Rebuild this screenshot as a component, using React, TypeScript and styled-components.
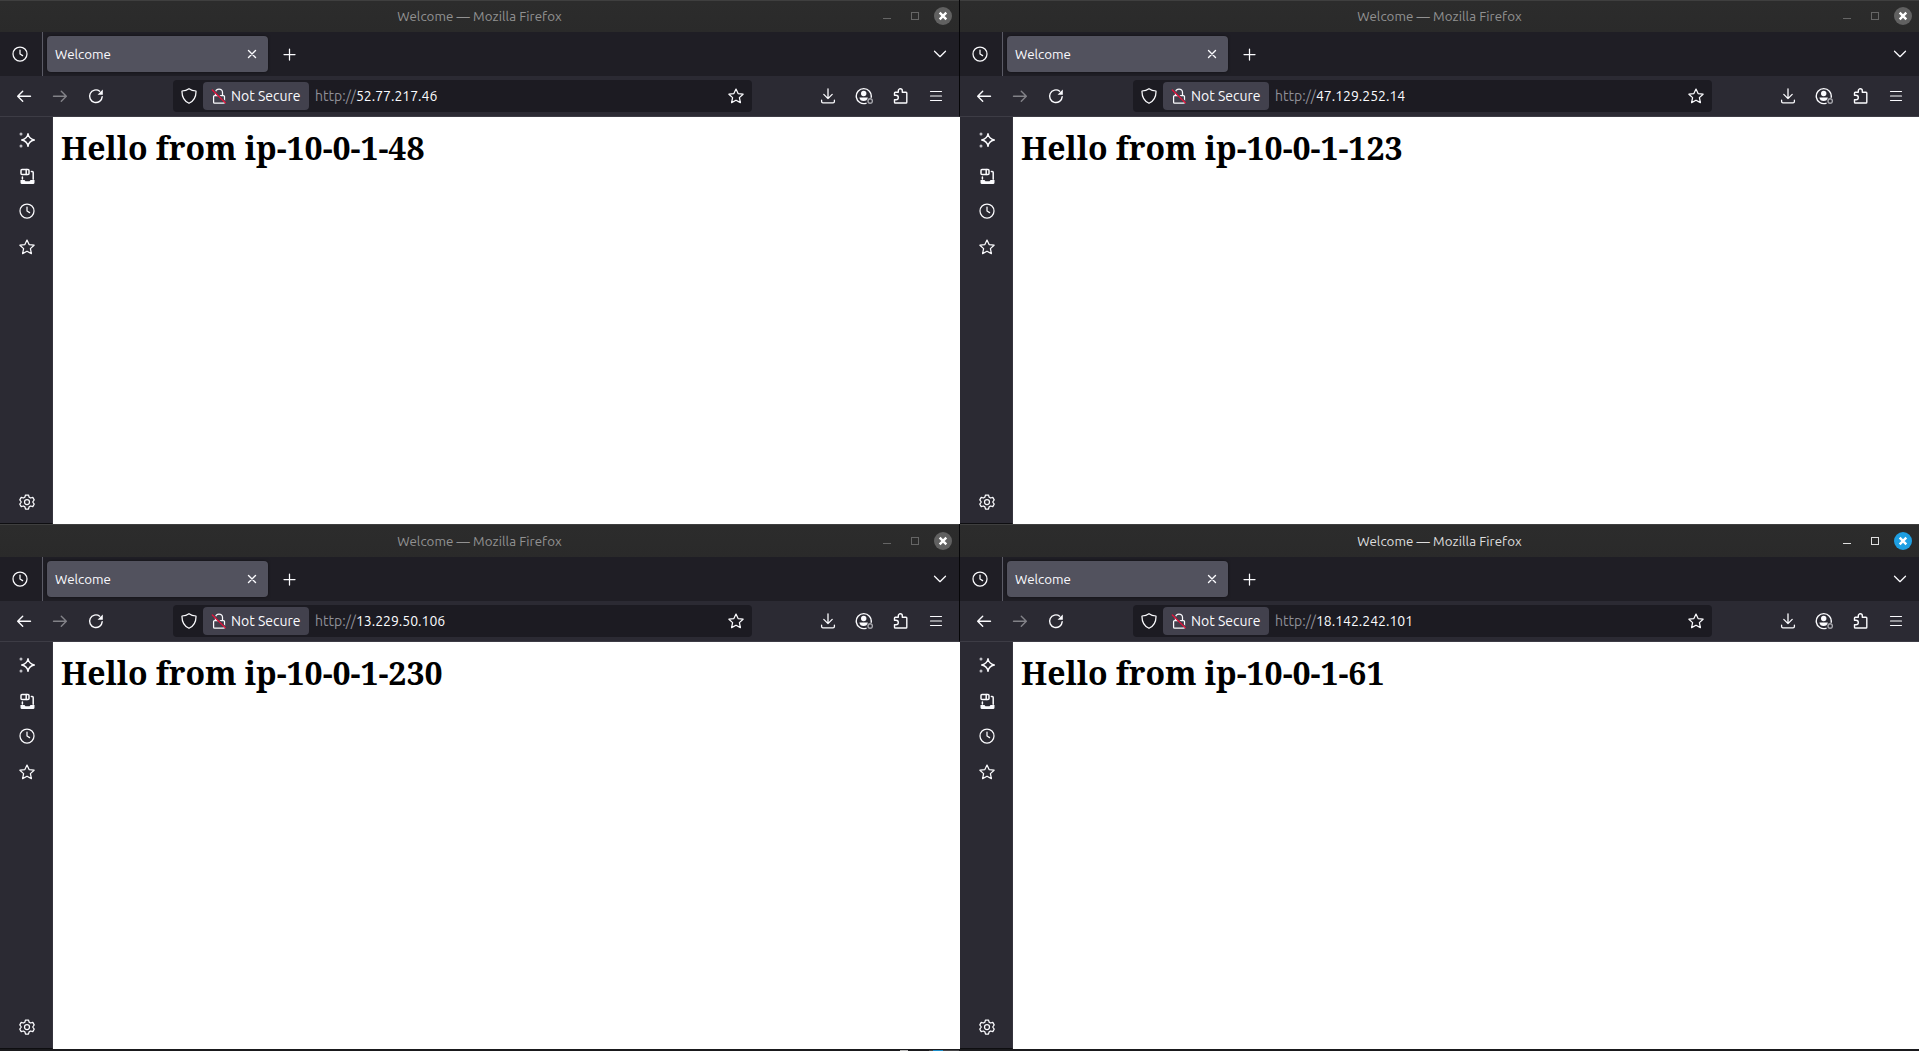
import React from "react";
import styled, { createGlobalStyle, css } from "styled-components";

const UI_FONT = `"Ubuntu", "Noto Sans", "Open Sans", sans-serif`;

const GlobalStyle = createGlobalStyle`
  * { box-sizing: border-box; }
  html, body { margin: 0; padding: 0; background: #151517; overflow: hidden; }
  svg { display: block; flex: none; }
`;

const Desktop = styled.div`
  display: grid;
  grid-template-columns: 960px 959px;
  grid-template-rows: 524px 525px 2px;
  width: 1919px;
  height: 1051px;
  font-family: ${UI_FONT};
  color: #fbfbfe;
`;

const Frame = styled.section`
  display: flex;
  flex-direction: column;
  min-width: 0;
  background: #2b2a33;
`;

const edge = css`
  border-right: 1px solid #060608;
  ${Frame}:nth-child(even) & { border-right: 0; }
`;

const TitleBar = styled.header<{ $active?: boolean; $lower?: boolean }>`
  display: grid;
  grid-template-columns: 1fr auto 1fr;
  align-items: center;
  flex: none;
  height: ${(p) => (p.$lower ? 33 : 32)}px;
  padding-top: ${(p) => (p.$lower ? 1 : 0)}px;
  background: linear-gradient(#3f3f3f 0 1px, #2c2c2c 1px 2px, #2a2a2a);
  color: ${(p) => (p.$active ? "#dedede" : "#929292")};
  ${edge}
`;

const Title = styled.h2`
  grid-column: 2;
  margin: 0;
  padding-top: 1px;
  font-size: 13.33px;
  line-height: 19px;
  font-weight: 400;
  letter-spacing: 0.07px;
  white-space: nowrap;
`;

const WindowControls = styled.div`
  display: flex;
  align-items: center;
  justify-content: flex-end;
  padding-right: 7px;
`;

const TabStrip = styled.nav`
  display: flex;
  align-items: center;
  flex: none;
  height: 44px;
  background: #1f1e25;
  ${edge}
`;

const HistorySlot = styled.div`
  display: flex;
  align-items: center;
  width: 43px;
  height: 44px;
  padding-left: 11.5px;
  border-right: 1px solid #5b5b66;
`;

const Tab = styled.div`
  display: flex;
  align-items: center;
  justify-content: space-between;
  width: 221px;
  height: 36px;
  margin: 0 13px 0 4px;
  padding: 0 8px;
  border-radius: 4px;
  background: #52525e;
  box-shadow: 0 0 3px rgba(0, 0, 0, 0.5);
`;

const TabLabel = styled.span`
  padding-top: 1px;
  font-size: 13.33px;
  line-height: 19px;
`;

const TabsMenu = styled.div`
  margin-left: auto;
  padding-right: 11px;
`;

const Toolbar = styled.div`
  display: flex;
  align-items: center;
  flex: none;
  height: 41px;
  padding: 0 15px 1px 16px;
  border-bottom: 1px solid #3d3c45;
  ${edge}
`;

const NavButtons = styled.div`
  display: flex;
  gap: 20px;
  width: 157px;
`;

const AddressBar = styled.div`
  display: flex;
  align-items: center;
  width: 579px;
  height: 32px;
  padding: 0 8px;
  border-radius: 4px;
  background: #1c1b22;
`;

const SecurityChip = styled.div`
  display: flex;
  align-items: center;
  gap: 4px;
  width: 106px;
  height: 28px;
  margin: 0 6px 0 6px;
  padding-left: 8px;
  border-radius: 4px;
  background: #42414d;
  font-size: 14px;
  white-space: nowrap;
`;

const Url = styled.span`
  font-size: 14px;
  white-space: nowrap;
`;

const Scheme = styled.span`
  color: #8f8f98;
`;

const StarSlot = styled.div`
  margin-left: auto;
`;

const Actions = styled.div`
  display: flex;
  align-items: center;
  justify-content: space-between;
  width: 124px;
  margin-left: auto;
`;

const Body = styled.div`
  display: flex;
  flex: 1;
  min-height: 0;
`;

const Sidebar = styled.aside`
  display: flex;
  flex-direction: column;
  gap: 20px;
  width: 53px;
  padding: 15px 0 13px 19px;
  border-right: 1px solid #35343d;
  border-bottom: 1px solid #0e0e11;
`;

const HistoryItem = styled.div`
  margin: -1px 0 0 -0.5px;
`;

const SettingsSlot = styled.div`
  margin-top: auto;
`;

const Page = styled.main`
  flex: 1;
  padding: 9px 8px;
  background: #ffffff;
`;

const Heading = styled.h1`
  margin: 0;
  color: #000000;
  font-family: "Noto Serif", "DejaVu Serif Condensed", "DejaVu Serif", serif;
  font-size: 32px;
  line-height: 44px;
  font-weight: 700;
  letter-spacing: -0.04px;
  white-space: nowrap;
`;

const Panel = styled.footer`
  display: flex;
  grid-column: 1 / -1;
  background: #1a1a1d;
`;

const PanelMark = styled.i<{ $gap: number; $w: number; $c: string }>`
  width: ${(p) => p.$w}px;
  height: 1px;
  margin: 1px 0 0 ${(p) => p.$gap}px;
  background: ${(p) => p.$c};
`;

type IconProps = { children: React.ReactNode; dim?: boolean; size?: number; width?: number };

const Icon = ({ children, dim, size = 16, width = 1.25 }: IconProps) => (
  <svg
    width={size}
    height={size}
    viewBox={`0 0 ${size} ${size}`}
    fill="none"
    stroke="#fbfbfe"
    strokeWidth={width}
    strokeLinecap="round"
    strokeLinejoin="round"
    opacity={dim ? 0.42 : 1}
  >
    {children}
  </svg>
);

const Clock = () => (
  <Icon>
    <circle cx="8" cy="8" r="7" />
    <path d="M8 4v4l2.6 1.6" />
  </Icon>
);
const Close = () => (
  <Icon width={1.4}>
    <path d="M4.5 4.5l7 7M11.5 4.5l-7 7" />
  </Icon>
);
const Plus = () => (
  <Icon>
    <path d="M8.5 3v11M3 8.5h11" />
  </Icon>
);
const Chevron = () => (
  <Icon>
    <path d="M2.5 5.2L8 10.7l5.5-5.5" />
  </Icon>
);
const Back = () => (
  <Icon width={1.4}>
    <path d="M14.5 8.2H1.8M6.7 3.2l-5 5 5 5" />
  </Icon>
);
const Forward = () => (
  <Icon width={1.4} dim>
    <path d="M1.5 8.2h12.7M9.3 3.2l5 5-5 5" />
  </Icon>
);
const Reload = () => (
  <Icon width={1.4}>
    <path d="M14.2 8.6A6.3 6.3 0 1 1 11.7 3.2" />
    <path d="M14.8 1.5v5.2H9.6z" fill="#fbfbfe" stroke="none" />
  </Icon>
);
const Shield = () => (
  <Icon>
    <path d="M8 .7c2 1.4 4.3 2.1 7 2.3.2 5.5-2 10-7 12.3C3 13 .8 8.5 1 3 3.7 2.8 6 2.1 8 .7z" />
  </Icon>
);
const BrokenLock = () => (
  <Icon>
    <path d="M4.5 7V4.5a3.5 3.5 0 0 1 7 0V7" />
    <rect x="2.6" y="7.5" width="10.9" height="7.7" rx="1" />
    <path d="M1.6 1.2l13.4 13.3" stroke="#42414d" strokeWidth="1.6" strokeLinecap="butt" />
    <path d="M1.3 2l13 12.8" stroke="#e2133c" strokeWidth="1.3" />
  </Icon>
);
const Star = () => (
  <Icon>
    <path d="M8 1.1l2.1 4.5 5 .6-3.7 3.4 1 5L8 12.2l-4.4 2.4 1-5L.9 6.2l5-.6z" />
  </Icon>
);
const Download = () => (
  <Icon width={1.3}>
    <path d="M8 .8v9.7M3.8 6.4L8 10.6l4.2-4.2M1.6 12.2v1.3q0 1.3 1.3 1.3h10.2q1.3 0 1.3-1.3v-1.3" />
  </Icon>
);
const Account = () => (
  <Icon size={18} width={1.4}>
    <path d="M11 16.3A7.5 7.5 0 1 1 16.2 10.2" />
    <circle cx="8.7" cy="6.5" r="2.7" fill="#fbfbfe" stroke="none" />
    <path d="M4.3 10.5h8.6q-.8 3.5-4.3 3.5t-4.3-3.5z" fill="#fbfbfe" stroke="none" />
    <circle cx="15.2" cy="14" r="2.2" stroke="#a4a4aa" />
  </Icon>
);
const Extension = () => (
  <Icon width={1.4}>
    <path d="M1.5 7.2V5q0-.8.8-.8h3V2.8a2 2 0 0 1 4 0v1.4H13q.8 0 .8.8v9.2q0 .8-.8.8H2.3q-.8 0-.8-.8v-2.4H3a2.2 2.2 0 0 0 0-4.6z" />
  </Icon>
);
const Menu = () => (
  <Icon width={1.2}>
    <path d="M2.5 3.5h11M2.5 8h11M2.5 12.5h11" />
  </Icon>
);
const Sparkle = () => (
  <Icon width={1.4}>
    <path d="M9 1.7q.8 5.3 6.3 6.3-5.5 1-6.3 6.3Q8.2 9 2.7 8q5.5-1 6.3-6.3z" />
    <circle cx="2" cy="2" r="1.5" fill="#bcbcc2" stroke="none" />
    <circle cx="2" cy="14" r="1.5" fill="#bcbcc2" stroke="none" />
  </Icon>
);
const Devices = () => (
  <Icon width={1.5}>
    <rect x="2" y="1.5" width="8" height="5" rx="1" />
    <path d="M7.2 1.5v5M12.4 3.6h.8q1 0 1 1v6.7M3.4 9v2" />
    <path d="M1.5 12h4l1 1.2h4l1-1.2h4v2.4q0 1.5-1.4 1.5H2.900q-1.400 0-1.400-1.500z" fill="#fbfbfe" stroke="none" />
  </Icon>
);
const Gear = () => (
  <Icon>
    <path d="M6.5 1h3l.6 2.1 1.5.9 2.200-.6 1.400 2.500L13.700 8l1.500 2.100-1.400 2.500-2.200-.6-1.500.9L9.500 15h-3l-.6-2.100-1.500-.9-2.200.6L.8 10.100 2.300 8 .8 5.900l1.400-2.500 2.200.6 1.500-.9z" />
    <circle cx="8" cy="8" r="2.500" />
  </Icon>
);

const Controls = ({ active }: { active?: boolean }) => {
  const stroke = active ? "#dfdfdf" : "#656565";
  return (
    <svg width="70" height="20" viewBox="0 0 70 20" fill="none">
      <path d="M1 12.5h8" stroke={stroke} />
      <rect x="29.5" y="6.5" width="7" height="7" stroke={stroke} />
      <circle cx="61" cy="10" r="9" fill={active ? "#1e9fe2" : "#616161"} />
      <path d="M57.7 6.7l6.6 6.6M64.3 6.7l-6.6 6.6" stroke="#fff" strokeWidth="2.4" />
    </svg>
  );
};

type WindowProps = { ip: string; host: string; active?: boolean; lower?: boolean };

const BrowserWindow = ({ ip, host, active, lower }: WindowProps) => (
  <Frame>
    <TitleBar $active={active} $lower={lower}>
      <Title>Welcome — Mozilla Firefox</Title>
      <WindowControls>
        <Controls active={active} />
      </WindowControls>
    </TitleBar>
    <TabStrip>
      <HistorySlot>
        <Clock />
      </HistorySlot>
      <Tab>
        <TabLabel>Welcome</TabLabel>
        <Close />
      </Tab>
      <Plus />
      <TabsMenu>
        <Chevron />
      </TabsMenu>
    </TabStrip>
    <Toolbar>
      <NavButtons>
        <Back />
        <Forward />
        <Reload />
      </NavButtons>
      <AddressBar>
        <Shield />
        <SecurityChip>
          <BrokenLock />
          Not Secure
        </SecurityChip>
        <Url>
          <Scheme>http://</Scheme>
          {ip}
        </Url>
        <StarSlot>
          <Star />
        </StarSlot>
      </AddressBar>
      <Actions>
        <Download />
        <Account />
        <Extension />
        <Menu />
      </Actions>
    </Toolbar>
    <Body>
      <Sidebar>
        <Sparkle />
        <Devices />
        <HistoryItem>
          <Clock />
        </HistoryItem>
        <Star />
        <SettingsSlot>
          <Gear />
        </SettingsSlot>
      </Sidebar>
      <Page>
        <Heading>Hello from {host}</Heading>
      </Page>
    </Body>
  </Frame>
);

export default function App() {
  return (
    <>
      <GlobalStyle />
      <Desktop>
        <BrowserWindow ip="52.77.217.46" host="ip-10-0-1-48" />
        <BrowserWindow ip="47.129.252.14" host="ip-10-0-1-123" />
        <BrowserWindow ip="13.229.50.106" host="ip-10-0-1-230" lower />
        <BrowserWindow ip="18.142.242.101" host="ip-10-0-1-61" lower active />
        <Panel>
          <PanelMark $gap={900} $w={8} $c="#b8b8b8" />
          <PanelMark $gap={21} $w={4} $c="#48484a" />
          <PanelMark $gap={0} $w={10} $c="#1e8fca" />
          <PanelMark $gap={0} $w={16} $c="#48484a" />
        </Panel>
      </Desktop>
    </>
  );
}
